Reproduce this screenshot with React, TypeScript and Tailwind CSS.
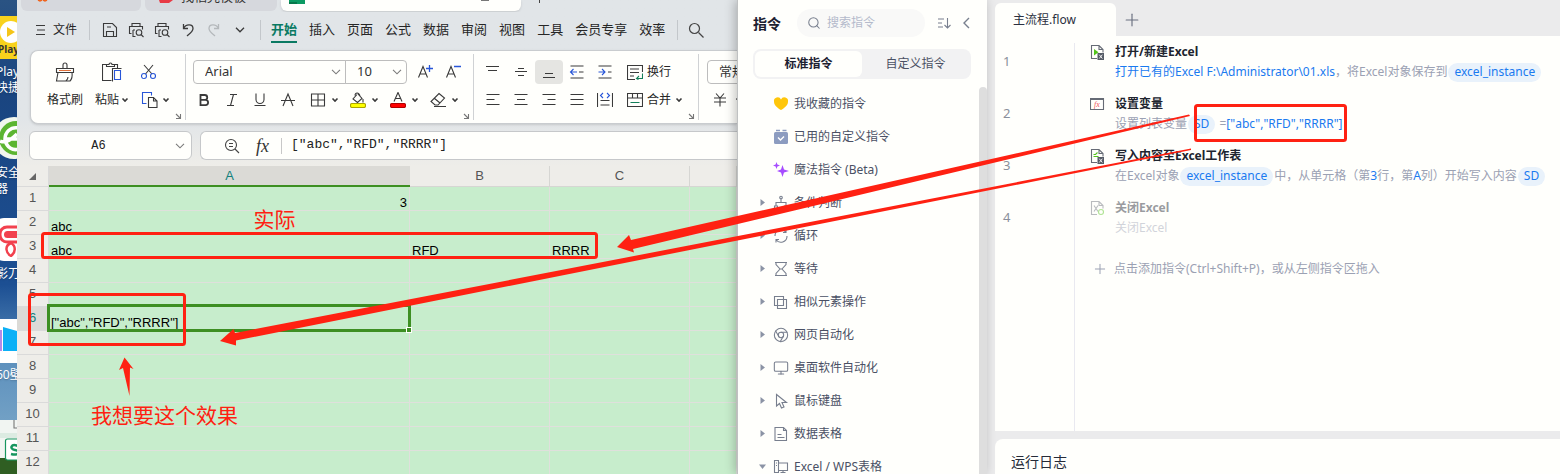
import React from "react";
import { Monitor, Chrome, Search, Plus } from "lucide-react";

const INK = "#3a3a3a";

interface IconProps {
  w?: number;
  h?: number;
  color?: string;
  children: React.ReactNode;
}

const Icon: React.FC<IconProps> = ({ w = 16, h = 16, color = INK, children }) => (
  <svg
    width={w}
    height={h}
    viewBox={`0 0 ${w} ${h}`}
    fill="none"
    stroke={color}
    strokeWidth="1.1"
    className="shrink-0"
    aria-hidden="true"
  >
    {children}
  </svg>
);

const Caret = () => (
  <Icon w={8} h={6}>
    <path d="M1.500 1.500L4 4l2.500-2.500" strokeWidth="1.600" />
  </Icon>
);

const Chevron = () => (
  <Icon w={10} h={6} color="#7a7a7a">
    <path d="M1 .8l4 4 4-4" />
  </Icon>
);

const Corner = () => (
  <span className="absolute right-[3px] bottom-0">
    <Icon w={7} h={7} color="#777">
      <path d="M1 1l4.500 4.500M5.500 1v4.500H1" />
    </Icon>
  </span>
);

const Divider = () => <span className="h-5 w-px shrink-0 bg-[#c3c7cb]" />;

interface ToolProps {
  label: string;
  className?: string;
  children: React.ReactNode;
}

const Tool: React.FC<ToolProps> = ({ label, className = "w-7 justify-center", children }) => (
  <button type="button" aria-label={label} className={`flex h-6 shrink-0 items-center ${className}`}>
    {children}
  </button>
);

/* ---------- desktop ---------- */

const desktopIcons = [
  {
    lines: ["Play", "快捷方"],
    className: "-ml-1",
    icon: (
      <>
        <rect width="17" height="43" fill="#f8d21c" stroke="none" />
        <circle cx="11" cy="16" r="11" fill="#fff" stroke="none" />
        <path d="M7 11v10l8-5z" fill="#f5c518" stroke="none" />
        <text x="-2" y="37" fontSize="10" fontWeight="700" fill="#333" stroke="none" fontFamily="Noto Sans">
          Play
        </text>
      </>
    ),
  },
  {
    lines: ["安全", "器"],
    className: "-ml-1",
    icon: (
      <>
        <circle cx="14" cy="21" r="21" fill="#f2f6ee" stroke="none" />
        <circle cx="16" cy="21" r="17" fill="#5cb531" stroke="none" />
        <path d="M19 11C10 9 5 16 5 22h14M0 24c4 2 9 1 17-7M5 23c2 8 8 11 14 9" stroke="#fff" strokeWidth="3.500" />
      </>
    ),
  },
  {
    lines: ["影刀"],
    className: "-ml-1",
    icon: (
      <>
        <rect x="-8" width="40" height="43" rx="12" fill="#fff" stroke="none" />
        <rect x="0" y="9" width="26" height="15" rx="7" fill="#fff" stroke="#f2414e" strokeWidth="3" />
        <rect x="4" y="13" width="16" height="7" rx="3.500" fill="#f2414e" stroke="none" />
        <path d="M11 25c-7 3-5 10 0 13M11 25c5 3 5 9 0 13" stroke="#f2414e" strokeWidth="2.500" />
      </>
    ),
  },
  {
    lines: ["60壁"],
    className: "-ml-1",
    icon: (
      <>
        <rect width="17" height="44" fill="#fff" stroke="none" />
        <path d="M3 8l14 4v20H3z" fill="#0bb0f6" stroke="none" />
        <path d="M0 11h2v21H0z" fill="#b48ae8" stroke="none" />
      </>
    ),
  },
  {
    lines: [],
    className: "",
    icon: (
      <>
        <rect width="17" height="38" fill="#f1f5f2" stroke="none" />
        <path d="M14 0v8h4" stroke="#777" />
        <path d="M0 13h17v5H0z" fill="#dcebe2" stroke="none" />
        <rect x="5.500" y="19" width="20" height="21" rx="2" fill="#fff" stroke="#17965f" strokeWidth="1.200" />
        <path d="M18 26c-7-3-9 3-3 4s4 6-4 4" stroke="#17965f" strokeWidth="2.500" />
      </>
    ),
  },
];

const Desktop = () => (
  <aside className="w-[17px] shrink-0 overflow-hidden bg-[linear-gradient(#2a5383,#1a4580_20%,#1c4f93_60%,#5d90bd_76%,#7aa7c8_94%,#2f5e22_96%)] pt-4">
    {desktopIcons.map((item, i) => (
      <div key={i} className="h-[101px] overflow-hidden">
        <Icon w={17} h={44}>
          {item.icon}
        </Icon>
        <div className={`pt-1 text-[12px] leading-4 whitespace-nowrap text-white text-shadow-sm ${item.className}`}>
          {item.lines.map((line) => (
            <p key={line}>{line}</p>
          ))}
        </div>
      </div>
    ))}
  </aside>
);

/* ---------- spreadsheet window ---------- */

const menuTabs = ["开始", "插入", "页面", "公式", "数据", "审阅", "视图", "工具", "会员专享", "效率"];

const PrintIcon = () => (
  <Icon w={17}>
    <path d="M4 4.500v-3h8v3M3.500 11.500H1.500v-7h13v3M5 8h2M5 8v6.500h2.500" />
    <circle cx="11" cy="10.500" r="2.800" />
    <path d="M13 12.500l2.500 2.500" />
  </Icon>
);

const TitleTabs = () => (
  <div className="flex h-3 items-start gap-1 overflow-hidden pl-1 text-[13px] leading-none text-[#333]">
    <div className="h-[11px] w-[120px] rounded-b-md bg-[#d6d8dd] pl-4">
      <Icon w={12} h={2}>
        <path d="M1 0l2 1 2-1M6 0l2 1 2-1" stroke="#f0641e" strokeWidth="1.500" />
      </Icon>
    </div>
    <div className="flex h-[11px] w-[132px] items-start gap-2 rounded-b-md bg-[#d6d8dd] pl-[14px]">
      <Icon w={14} h={4}>
        <path d="M0 0h14l-4 3H1z" fill="#e83a45" stroke="none" />
      </Icon>
      <span className="-mt-2.5">找稻壳模板</span>
    </div>
    <div className="flex h-[11px] w-[240px] items-start justify-between rounded-b-md bg-[#fffffc] pr-8 pl-2 shadow-sm">
      <Icon h={4}>
        <path d="M0 0h16v4H0z" fill="#0c9a62" stroke="none" />
        <path d="M0 2h8v2H0z" fill="#07784a" stroke="none" />
      </Icon>
      <span className="h-px w-2 bg-[#777]" />
    </div>
    <span className="ml-[14px] h-[3px] w-px bg-[#444]" />
  </div>
);

const MenuBar = () => (
  <nav className="mb-[2px] flex h-9 items-center pl-[19px] text-[#262626]">
    <button type="button" className="flex items-center gap-[7px] text-[12px]">
      <Icon w={10} h={12}>
        <path d="M0 1.500h9M1 6h8M0 10.500h9" />
      </Icon>
      文件
    </button>
    <span className="mr-[7px] ml-3 flex">
      <Divider />
    </span>
    {[
      {
        label: "保存",
        icon: (
          <Icon>
            <path d="M1.500 1.500h9l4 4v9h-13zM4.500 14.500v-5h7v5M5 5h4" />
          </Icon>
        ),
      },
      { label: "打印", icon: <PrintIcon /> },
      { label: "打印预览", icon: <PrintIcon /> },
      {
        label: "撤销",
        icon: (
          <Icon>
            <path d="M3.500 2v4.500H8M3.500 6.500C6 1.500 13 2 13 6.500c0 3-3 5-6 7.500" strokeWidth="1.300" />
          </Icon>
        ),
      },
      {
        label: "恢复",
        icon: (
          <Icon color="#b4b8bb">
            <path d="M12.500 2v4.500H8M12.500 6.500C10 1.500 3 2 3 6.500c0 3 3 5 6 7.500" strokeWidth="1.300" />
          </Icon>
        ),
      },
      {
        label: "更多",
        icon: (
          <Icon w={10} h={6}>
            <path d="M1 .8l4 4 4-4" strokeWidth="1.300" />
          </Icon>
        ),
      },
    ].map((item) => (
      <Tool key={item.label} label={item.label} className="w-[26px] justify-center">
        {item.icon}
      </Tool>
    ))}
    <span className="mr-[10px] ml-[7px] flex">
      <Divider />
    </span>
    <div className="flex gap-3 text-[13px] leading-6 whitespace-nowrap">
      {menuTabs.map((tab, i) => (
        <button
          key={tab}
          type="button"
          className={i === 0 ? "border-b-2 border-[#0a7a63] font-bold text-[#0a7a63]" : "border-b-2 border-transparent"}
        >
          {tab}
        </button>
      ))}
    </div>
    <span className="mr-[10px] ml-3 flex">
      <Divider />
    </span>
    <button type="button" aria-label="搜索">
      <Icon w={17} h={17} color="#444">
        <circle cx="6.500" cy="6.500" r="5" strokeWidth="1.200" />
        <path d="M10.500 10.500l5 5" strokeWidth="1.300" />
      </Icon>
    </button>
  </nav>
);

interface PickerProps {
  label: string;
  value: string;
  className: string;
}

const Picker: React.FC<PickerProps> = ({ label, value, className }) => (
  <div className={`relative flex h-6 shrink-0 items-center border border-[#bdbdbd] ${className}`}>
    <select
      aria-label={label}
      defaultValue={value}
      className="h-full w-full appearance-none bg-transparent pl-[11px] text-[13px] text-[#333] outline-none"
    >
      <option>{value}</option>
    </select>
    <span className="pointer-events-none absolute right-1">
      <Chevron />
    </span>
  </div>
);

const lineIcons: Record<string, string> = {
  顶端对齐: "M1 2.500h13M3 6.500h9",
  垂直居中: "M5 4.500h6M2 7.500h12M5 11.500h6",
  底端对齐: "M4 9.500h8M2 13.500h12",
  左对齐: "M1.500 2.500h13M1.500 7.500h8M1.500 12.500h13",
  水平居中: "M1.500 2.500h13M4 7.500h8M1.500 12.500h13",
  右对齐: "M1.500 2.500h13M6.500 7.500h8M1.500 12.500h13",
  两端对齐: "M1.500 2.500h13M1.500 7.500h13M1.500 12.500h13",
};

const LineTool: React.FC<{ label: string; active?: boolean }> = ({ label, active }) => (
  <Tool label={label} className={active ? "w-7 justify-center rounded bg-[#e5e5e2]" : "w-7 justify-center"}>
    <Icon>
      <path d={lineIcons[label]} />
    </Icon>
  </Tool>
);

const Ribbon = () => (
  <section className="ml-[13px] flex h-[74px] overflow-hidden rounded-l-lg border border-r-0 border-[#c9cccf] bg-[#fffffc] py-[3px] text-[12px] text-[#262626] shadow-sm">
    <div className="relative flex w-[155px] shrink-0 gap-3 border-r border-[#d0d2d4] pt-[6px] pl-4">
      <button type="button" className="flex w-9 flex-col items-center gap-1">
        <span className="flex h-6 items-center">
          <Icon w={20} h={20}>
            <path d="M8 6.500V3a2 2 0 014 0v3.500M1.500 6.500h17v4h-17zM3 10.500L1.500 19H15c2-2 2.500-5 2-8.500M11 19c1-1 2-2 2-4" />
            <path d="M4 8.500h12" stroke="#e0703a" />
          </Icon>
        </span>
        <span className="h-6 leading-6 whitespace-nowrap">格式刷</span>
      </button>
      <button type="button" className="flex w-[34px] flex-col items-center gap-1">
        <span className="flex h-6 items-center">
          <Icon w={20} h={20}>
            <path d="M4.500 2.500h-4v16h9M12.500 2.500h3v4M4.500 4.500v-2H7c0-2 3-2 3 0h2.500v2z" />
            <path d="M12.500 8.500h6v9h-6z" stroke="#2856d8" />
            <path d="M10.500 19.500v-13h9" />
          </Icon>
        </span>
        <span className="flex h-6 items-center gap-[2px] whitespace-nowrap">
          粘贴
          <Caret />
        </span>
      </button>
      <div className="flex flex-col gap-1">
        <Tool label="剪切" className="w-7">
          <Icon>
            <path d="M3 1l8 9M12 1L4.500 10" />
            <circle cx="3" cy="12" r="2.500" stroke="#2856d8" />
            <circle cx="12" cy="12" r="2.500" stroke="#2856d8" />
          </Icon>
        </Tool>
        <Tool label="复制" className="w-7 gap-1">
          <Icon w={17}>
            <path d="M5.500 11.500h-4v-11h9v3" stroke="#2856d8" />
            <path d="M7.500 5.500h5l3.500 3.500v6.500H7.500zM12.500 5.500V9H16" />
          </Icon>
          <Caret />
        </Tool>
      </div>
      <Corner />
    </div>

    <div className="relative w-[288px] shrink-0 border-r border-[#d0d2d4] pt-[6px] pl-1">
      <div className="flex pl-[3px]">
        <Picker label="字体" value="Arial" className="w-[153px] rounded-l" />
        <Picker label="字号" value="10" className="-ml-px w-[62px] rounded-r" />
        <Tool label="增大字号" className="ml-1 w-7 justify-center">
          <Icon>
            <path d="M1.500 13.500l4.500-11 4.500 11M3 10h6" />
            <path d="M9 4.500h7M12.500 1v7" stroke="#2856d8" strokeWidth="1.300" />
          </Icon>
        </Tool>
        <Tool label="减小字号">
          <Icon>
            <path d="M1.500 13.500l4.500-11 4.500 11M3 10h6" />
            <path d="M9 2.500h7" stroke="#2856d8" strokeWidth="1.300" />
          </Icon>
        </Tool>
      </div>
      <div className="mt-1 flex">
        <Tool label="加粗">
          <Icon>
            <path d="M4.500 3h4.300a2.400 2.400 0 010 4.900H4.500zM4.500 7.900h5a2.600 2.600 0 010 5.200h-5z" strokeWidth="1.800" />
          </Icon>
        </Tool>
        <Tool label="倾斜">
          <Icon>
            <path d="M6 2.500h7M3 13.500h7M9.500 2.500l-3 11" />
          </Icon>
        </Tool>
        <Tool label="下划线">
          <Icon>
            <path d="M4 1.500v6a4 4 0 008 0v-6M2.500 13.500h11" />
          </Icon>
        </Tool>
        <Tool label="删除线">
          <Icon>
            <path d="M3 14L8 2l5 12M1 8.500h14" />
          </Icon>
        </Tool>
        <Tool label="边框" className="ml-2 w-10 gap-[5px]">
          <Icon>
            <path d="M1.500 2h13v12h-13zM8 2v12M1.500 8h13" />
          </Icon>
          <Caret />
        </Tool>
        <Tool label="填充颜色" className="w-10 gap-[5px]">
          <Icon>
            <path d="M7 2.500L3 7l4.500 3.500L12 6.500 8 2M5 3.500C5 0 9 0 10 4M13 7v3.500" />
            <rect x=".5" y="11.500" width="15" height="4" rx="1.500" fill="#ff0" stroke="#aaa400" />
          </Icon>
          <Caret />
        </Tool>
        <Tool label="字体颜色" className="w-10 gap-[5px]">
          <Icon>
            <path d="M4 9.500L8 .500l4 9M5.500 6.500h5" />
            <rect x=".5" y="11.500" width="15" height="4" rx="1.500" fill="#f00" stroke="#b00000" />
          </Icon>
          <Caret />
        </Tool>
        <Tool label="清除" className="w-10 gap-[5px]">
          <Icon>
            <path d="M9 1.500L14.500 6l-6.500 7H5L1 9.500zM4 6l6 5M4 14.500h12" />
          </Icon>
          <Caret />
        </Tool>
      </div>
      <Corner />
    </div>

    <div className="relative flex w-[225px] shrink-0 gap-2 border-r border-[#d0d2d4] pt-[6px] pl-[5px]">
      <div className="flex flex-col gap-1">
        <div className="flex">
          <LineTool label="顶端对齐" />
          <LineTool label="垂直居中" />
          <LineTool label="底端对齐" active />
          <Tool label="减少缩进">
            <Icon>
              <path d="M1.500 2h13M10 8h4.500M1.500 14h13" />
              <path d="M8 8H1.500M4.500 5l-3 3 3 3" stroke="#2856d8" />
            </Icon>
          </Tool>
          <Tool label="增加缩进">
            <Icon>
              <path d="M1.500 2h13M11 8h3.500M1.500 14h13" />
              <path d="M1.500 8H8M5 5l3 3-3 3" stroke="#2856d8" />
            </Icon>
          </Tool>
        </div>
        <div className="flex">
          <LineTool label="左对齐" />
          <LineTool label="水平居中" />
          <LineTool label="右对齐" />
          <LineTool label="两端对齐" />
          <Tool label="分散对齐">
            <Icon>
              <path d="M.5 1v14M15.500 1v14M3.500 8.500h9M3.500 13h9" />
              <path d="M6 1L3.500 3.500 6 6M10 1l2.500 2.500L10 6" stroke="#2856d8" />
            </Icon>
          </Tool>
        </div>
      </div>
      <div className="flex flex-col gap-1">
        <button type="button" className="flex h-6 items-center gap-1 whitespace-nowrap">
          <Icon>
            <path d="M8 15.500H.5v-14h15V8M3 5h9M3 8.500h9M3 12h4" />
            <path d="M15.500 9.500v5H9.500M12 12l-2.500 2.500 2 1" stroke="#14805a" />
          </Icon>
          换行
        </button>
        <button type="button" className="flex h-6 items-center gap-1 whitespace-nowrap">
          <Icon>
            <path d="M.5 1.500h15v13H.5zM.5 6h15M5.500 1.500V6M10.500 1.500V6" />
            <path d="M3.500 10.500h9" stroke="#14805a" />
          </Icon>
          合并
          <Caret />
        </button>
      </div>
      <Corner />
    </div>

    <div className="flex flex-col gap-1 pt-[6px] pl-2">
      <Picker label="数字格式" value="常规" className="w-[110px] rounded" />
      <Tool label="货币" className="gap-2 pl-[6px]">
        <Icon w={14}>
          <path d="M3 1.500L7 6l4-4.500M1 6h12M1 10h12M7 6v8.500" />
        </Icon>
        <Caret />
      </Tool>
    </div>
  </section>
);

const FormulaBar = () => (
  <div className="mt-[7px] mb-[6px] flex h-[29px] gap-2 pl-[12px]">
    <label className="flex w-[163px] shrink-0 items-center rounded-md border border-[#c6c8ca] bg-[#fffffc] pr-[6px]">
      <input
        aria-label="名称框"
        defaultValue="A6"
        className="w-full min-w-0 bg-transparent pl-1 pr-3 text-center font-['Liberation_Mono',monospace] text-[12px] text-[#222] outline-none"
      />
      <Chevron />
    </label>
    <div className="flex min-w-0 flex-1 items-center rounded-l-md border border-r-0 border-[#c6c8ca] bg-[#fffffc] pl-[23px]">
      <Icon color="#444">
        <circle cx="7" cy="7" r="5.500" />
        <path d="M11 11l4 4M5 5.500h4M5 8.500h4" />
      </Icon>
      <span className="ml-4 font-['Liberation_Serif',serif] text-[18px] leading-none text-[#333] italic">fx</span>
      <span className="mr-[9px] ml-3 h-4 w-px bg-[#c8c8c8]" />
      <input
        aria-label="编辑栏"
        defaultValue={'["abc","RFD","RRRR"]'}
        className="mb-[2px] min-w-0 flex-1 bg-transparent font-['Liberation_Mono',monospace] text-[13px] text-[#222] outline-none"
      />
    </div>
  </div>
);

const columns = ["A", "B", "C", ""];

const cells: Record<string, string> = {
  A1: "3",
  A2: "abc",
  A3: "abc",
  B3: "RFD",
  C3: "RRRR",
  A6: '["abc","RFD","RRRR"]',
};

const Sheet = () => (
  <table className="w-full table-fixed border-separate border-spacing-0 font-['Liberation_Sans',sans-serif]">
    <colgroup>
      <col className="w-8" />
      <col className="w-[361px]" />
      <col className="w-[140px]" />
      <col className="w-[140px]" />
      <col />
    </colgroup>
    <thead>
      <tr className="h-[21px] text-[13px] leading-4 text-[#555]">
        <th aria-label="全选" className="border-r border-b border-[#dadada] bg-[#eeede9]">
          <span className="flex justify-center">
            <Icon w={7} h={7}>
              <path d="M7 0v7H0z" fill="#666" stroke="none" />
            </Icon>
          </span>
        </th>
        {columns.map((col) => (
          <th
            key={col}
            className={
              col === "A"
                ? "border-b-2 border-[#3d8f22] bg-[#dbdad6] font-normal text-[#12807c]"
                : "border-r border-b border-[#d6d6d3] bg-[#eeede9] font-normal"
            }
          >
            {col}
          </th>
        ))}
      </tr>
    </thead>
    <tbody>
      {Array.from({ length: 12 }, (_, i) => i + 1).map((row) => (
        <tr key={row} className="h-6">
          <th
            className={
              row === 6
                ? "border-r border-b border-[#dadada] bg-[#dbdad6] pb-[2px] text-[13px] leading-4 font-normal text-[#12807c]"
                : "border-r border-b border-[#dadada] bg-[#eeede9] pb-[2px] text-[13px] leading-4 font-normal text-[#555]"
            }
          >
            {row}
          </th>
          {columns.map((col) => {
            const id = `${col}${row}`;
            return (
              <td
                key={col}
                className={`relative border-r border-b border-[#dfe0dc] bg-[#c7edcc] px-[2px] align-bottom text-[13px] leading-[15px] text-black ${id === "A1" ? "text-right" : ""}`}
              >
                {cells[id]}
                {id === "A6" && (
                  <span className="absolute -top-[3px] -right-[2px] -bottom-[2px] -left-[2px] z-10 border-3 border-[#3d8f22]">
                    <span className="absolute -right-1 -bottom-1 size-[6px] border border-[#fffffc] bg-[#3d8f22]" />
                  </span>
                )}
              </td>
            );
          })}
        </tr>
      ))}
    </tbody>
  </table>
);

const SpreadsheetWindow = () => (
  <main className="w-6/13 shrink-0 overflow-hidden bg-linear-to-b from-[#e1e5e8] from-25% to-[#eeede9] to-35%">
    <TitleTabs />
    <MenuBar />
    <Ribbon />
    <FormulaBar />
    <Sheet />
  </main>
);

/* ---------- command panel ---------- */

interface Command {
  name: string;
  arrow?: "right" | "down";
  icon: React.ReactNode;
}

const GREY = "#787f8e";

const commands: Command[] = [
  {
    name: "我收藏的指令",
    icon: (
      <Icon>
        <path
          d="M8 14C5.500 12.500 1 9.500 1 5.700A3.700 3.700 0 018 3.500a3.700 3.700 0 017 2.200C15 9.500 10.500 12.500 8 14z"
          fill="#ffc60a"
          stroke="none"
        />
      </Icon>
    ),
  },
  {
    name: "已用的自定义指令",
    icon: (
      <Icon>
        <path d="M3 1.500h4M9.500 1.500h4" stroke="#8c9cc0" strokeWidth="1.500" />
        <rect x="1" y="3" width="14" height="12" rx="1.500" fill="#8c9cc0" stroke="none" />
        <path d="M5 8.500l2.500 2.500L11 7.500" stroke="#fff" strokeWidth="1.400" />
      </Icon>
    ),
  },
  {
    name: "魔法指令 (Beta)",
    icon: (
      <Icon>
        <path
          d="M9.500 3l1.500 4.500 5 1.500-5 1.500L9.500 15 8 10.500 4 9l4-1.500zM3.500 0l.9 2.600 2.600.9-2.600.9-.9 2.600-.9-2.600L0 3.500l2.600-.9z"
          fill="#a64dff"
          stroke="none"
        />
      </Icon>
    ),
  },
  {
    name: "条件判断",
    arrow: "right",
    icon: (
      <Icon color={GREY}>
        <circle cx="8" cy="2.500" r="1.300" />
        <path d="M8 4v3M3 11V7.500h10V11M1.500 11v3h3v-3zM11.500 11v3h3v-3z" />
      </Icon>
    ),
  },
  {
    name: "循环",
    arrow: "right",
    icon: (
      <Icon color={GREY}>
        <path d="M14 8A6 6 0 013 11.500M2 8a6 6 0 0111-3.500M3 14.500v-3h3M13 1.500v3h-3" />
      </Icon>
    ),
  },
  {
    name: "等待",
    arrow: "right",
    icon: (
      <Icon color={GREY}>
        <path d="M2 1.500h12M2 14.500h12M3 1.500v2L7 8l-4 4.500v2M13 1.500v2L9 8l4 4.500v2M7 8h2" />
      </Icon>
    ),
  },
  {
    name: "相似元素操作",
    arrow: "right",
    icon: (
      <Icon color={GREY}>
        <path d="M1.500 2.500h9v9h-9zM4.500 5.500h9v9h-9z" />
      </Icon>
    ),
  },
  { name: "网页自动化", arrow: "right", icon: <Chrome size={16} strokeWidth={1.6} color={GREY} /> },
  { name: "桌面软件自动化", arrow: "right", icon: <Monitor size={16} strokeWidth={1.6} color={GREY} /> },
  {
    name: "鼠标键盘",
    arrow: "right",
    icon: (
      <Icon color={GREY}>
        <path d="M3.500 1.500v11.500l3-2.500 2 4.500 2.500-1-2-4.500h4.500z" />
      </Icon>
    ),
  },
  {
    name: "数据表格",
    arrow: "right",
    icon: (
      <Icon color={GREY}>
        <path d="M2 1.500h8.500l3 3v10H2zM10.500 1.500v3h3M4.500 8.500h4M4.500 11.500h7" />
      </Icon>
    ),
  },
  {
    name: "Excel / WPS表格",
    arrow: "down",
    icon: (
      <Icon color={GREY}>
        <path d="M5.500 13.500h-4v-12h4zM5.500 4h9v7.500h-9M10 11.500v2M7.500 13.500h5M3 4h1M3 6.500h1" />
      </Icon>
    ),
  },
];

const CommandPanel = () => (
  <aside className="z-10 flex w-[250px] shrink-0 flex-col border-l border-[#bfc1c2] bg-[#fffffc] shadow-[-2px_0_10px_rgba(0,0,0,0.25)]">
    <header className="flex items-center pt-[9px] pl-[15px] text-[#1c2030]">
      <h2 className="text-[14px] font-bold">指令</h2>
      <label className="ml-4 flex h-7 w-32 items-center gap-[6px] rounded-full bg-[#f9f9f8] pl-[10px]">
        <Search size={14} strokeWidth={1.8} color={GREY} className="shrink-0" />
        <input
          aria-label="搜索指令"
          placeholder="搜索指令"
          className="w-full min-w-0 bg-transparent text-[12px] outline-none placeholder:text-[#b4bacb]"
        />
      </label>
      <button type="button" aria-label="排序" className="ml-3">
        <Icon w={14} h={12} color={GREY}>
          <path d="M1 2h6M1 6h4M1 10h5M10.500 1v9.500M7.500 8l3 3 3-3" />
        </Icon>
      </button>
      <button type="button" aria-label="收起" className="ml-3">
        <Icon w={7} h={12} color={GREY}>
          <path d="M6 1L1 6l5 5" strokeWidth="1.400" />
        </Icon>
      </button>
    </header>
    <div className="mt-3 mr-4 ml-[15px] flex h-[30px] rounded-lg bg-[#f2f2f3] p-[2px] text-[12px]">
      <button type="button" className="flex-1 rounded-md bg-[#fffffc] font-bold text-[#1c2030]">
        标准指令
      </button>
      <button type="button" className="flex-1 text-[#4a5064]">
        自定义指令
      </button>
    </div>
    <div className="mt-2 flex min-h-0 flex-1 justify-between overflow-hidden">
      <ul>
        {commands.map((item) => (
          <li key={item.name} className="flex h-[33px] items-center pl-[21px] text-[12px] text-[#4a5064]">
            <span className="w-[14px]">
              {item.arrow && (
                <Icon w={7} h={7}>
                  <path
                    d={item.arrow === "right" ? "M1.500 0L6 3.500 1.500 7z" : "M0 1.500h7L3.500 6z"}
                    fill="#8b93a5"
                    stroke="none"
                  />
                </Icon>
              )}
            </span>
            <span className="flex w-[21px]">{item.icon}</span>
            {item.name}
          </li>
        ))}
      </ul>
      <span className="w-2 rounded-t-full bg-[#dedede]" />
    </div>
  </aside>
);

/* ---------- flow editor ---------- */

const Var: React.FC<{ children: string }> = ({ children }) => (
  <span className="mx-px inline-block h-[19px] rounded-full bg-[#e9f2fb] px-[6px] leading-[18px] text-[#1a7af0]">
    {children}
  </span>
);

const Val: React.FC<{ children: React.ReactNode }> = ({ children }) => (
  <span className="text-[#1a7af0]">{children}</span>
);

const SheetIcon: React.FC<{ children: React.ReactNode }> = ({ children }) => (
  <Icon color="#666b75">
    <path d="M7 14.500H1.500v-13h7.500l4 4v3M9 1.500v4h4" />
    {children}
  </Icon>
);

const BadgeX = () => (
  <>
    <rect x="7.500" y="9" width="6.500" height="7" fill="#555b66" stroke="none" />
    <path d="M9.300 10.700l3 3.800M12.300 10.700l-3 3.800" stroke="#fff" strokeWidth=".9" />
  </>
);

const steps = [
  {
    title: "打开/新建Excel",
    icon: (
      <SheetIcon>
        <path d="M4 5v6.500L8.500 8.300z" fill="#52c41a" stroke="none" />
        <BadgeX />
      </SheetIcon>
    ),
    body: (
      <>
        <Val>打开已有的Excel F:\Administrator\01.xls</Val>，将Excel对象保存到<Var>excel_instance</Var>
      </>
    ),
  },
  {
    title: "设置变量",
    icon: (
      <Icon color="#666b75">
        <path d="M.5 2.500h13v11H.5zM.5 3.500h13" />
        <text x="4" y="11" fontSize="8" fontStyle="italic" fill="#f0545a" stroke="none" fontFamily="Liberation Serif">
          fx
        </text>
      </Icon>
    ),
    body: (
      <>
        设置列表变量<Var>SD</Var> =<Val>["abc","RFD","RRRR"]</Val>
      </>
    ),
  },
  {
    title: "写入内容至Excel工作表",
    icon: (
      <SheetIcon>
        <path d="M3.500 6.500h2l2-2M3.500 8.500h5" stroke="#52c41a" />
        <BadgeX />
      </SheetIcon>
    ),
    body: (
      <>
        在Excel对象<Var>excel_instance</Var>中，从单元格（第<Val>3</Val>行，第<Val>A</Val>列）开始写入内容<Var>SD</Var>
      </>
    ),
  },
  {
    title: "关闭Excel",
    disabled: true,
    icon: (
      <SheetIcon>
        <path d="M4 5.500l4 6M8 5.500l-4 6" />
        <circle cx="11" cy="12" r="2.500" fill="#fffffc" stroke="#52c41a" />
      </SheetIcon>
    ),
    body: <>关闭Excel</>,
  },
];

const FlowEditor = () => (
  <section className="flex min-w-0 flex-1 flex-col bg-[#ebebec] pl-2">
    <div className="flex h-9 items-end">
      <button
        type="button"
        className="h-[33px] w-[121px] rounded-t-md bg-[#fffffc] pl-[18px] text-left text-[12px] text-[#2b3040]"
      >
        主流程.flow
      </button>
      <button type="button" aria-label="新建流程" className="mb-[6px] ml-[6px]">
        <Plus size={20} strokeWidth={1.4} color="#6a7080" />
      </button>
    </div>
    <div className="relative flex-1 bg-[#fffffc] text-[12px]">
      <span className="absolute top-[7px] bottom-0 left-[79px] w-px bg-[#e9e9f0]" />
      <ol>
        {steps.map((step, i) => (
          <li key={step.title} className="flex h-[52px] pl-2 whitespace-nowrap">
            <span className="w-[87px] text-[13px] leading-[50px] text-[#8a8f9b]">{i + 1}</span>
            <div className={step.disabled ? "flex gap-[9px] opacity-45" : "flex gap-[9px]"}>
              <span className="pt-2">{step.icon}</span>
              <div>
                <h3 className="pt-[7px] leading-[18px] font-bold text-[#20242f]">{step.title}</h3>
                <p className="pt-px leading-5 text-[#9ba1b3]">{step.body}</p>
              </div>
            </div>
          </li>
        ))}
      </ol>
      <button type="button" className="mt-4 ml-[97px] flex items-center gap-[6px] text-[12px] text-[#9ba1b3]">
        <Plus size={16} strokeWidth={1.5} />
        点击添加指令(Ctrl+Shift+P)，或从左侧指令区拖入
      </button>
    </div>
    <div className="mt-2 h-[35px] rounded-tl-lg bg-[#fffffc] pl-4">
      <h2 className="pt-3 text-[14px] leading-[22px] text-[#262b38]">运行日志</h2>
    </div>
  </section>
);

/* Red marks drawn across both windows */
const Annotations = () => (
  <svg
    width="1560"
    height="474"
    viewBox="0 0 1560 474"
    className="pointer-events-none absolute top-0 left-0 z-20 max-w-none"
  >
    <g fill="none" stroke="#ff2112" strokeWidth="3">
      <rect x="42.500" y="233.500" width="554" height="24" rx="2" />
      <rect x="29.500" y="294.500" width="155" height="50" rx="2" />
      <rect x="1195.500" y="105.500" width="150" height="35" rx="2" />
    </g>
    <g fill="#ff2112">
      <path d="M617 247l12-12 2 5L1189 114.500l1 1.500L633 249l1 3.500z" />
      <path d="M220 341l13.500-12 1.500 4L1191 148.500v1.500L236 340.500v5z" />
      <path d="M124.500 357.500L119 370l4-2 6.500 28L130 367.500l3.500 1.500z" />
      <text x="253.500" y="227" fontSize="21">
        实际
      </text>
      <text x="91" y="423" fontSize="21">
        我想要这个效果
      </text>
    </g>
  </svg>
);

const App = () => (
  <div className="relative flex h-screen overflow-hidden font-['Noto_Sans','Noto_Sans_CJK_SC',sans-serif]">
    <Desktop />
    <SpreadsheetWindow />
    <CommandPanel />
    <FlowEditor />
    <Annotations />
  </div>
);

export default App;
